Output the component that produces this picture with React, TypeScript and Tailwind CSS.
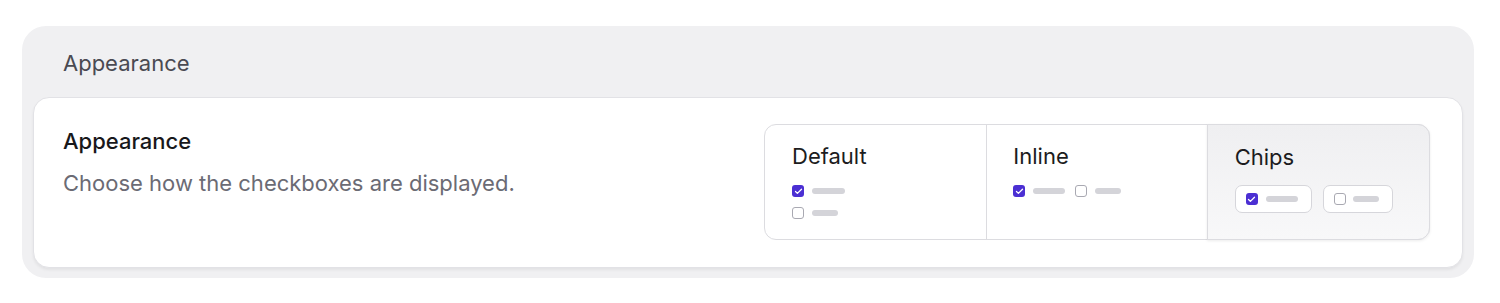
import { Check } from 'lucide-react'

const Box = ({ checked }: { checked?: boolean }) =>
  checked ? (
    <span className="flex h-[12px] w-[12px] items-center justify-center rounded-[3px] bg-[#4b2fd3]">
      <Check className="h-[9px] w-[9px] text-white" strokeWidth={3.5} />
    </span>
  ) : (
    <span className="h-[12px] w-[12px] rounded-[3px] border border-[#a9a9b2] bg-white" />
  )

const Bar = ({ w }: { w: string }) => <span className={`h-[6px] rounded-full bg-[#d4d4d9] ${w}`} />

export default function App() {
  return (
    <div className="min-h-screen bg-white pl-[22px] pr-[26px] pt-[26px] font-['Inter',sans-serif]">
      <div className="rounded-[24px] bg-[#f0f0f2] px-[11px] pb-[10px]">
        <div className="flex h-[71px] items-center px-[30px] pt-[4px] text-[22px] text-[#4a4a52]">Appearance</div>
        <div className="flex items-start justify-between rounded-[16px] border border-[#e2e2e6] bg-white pl-[29px] pr-[32px] pt-[26px] pb-[27px] shadow-[0_2px_3px_rgba(0,0,0,0.06)]">
          <div className="pt-[3px] leading-[28px]">
            <div className="text-[22px] font-medium text-[#18181b]">Appearance</div>
            <div className="mt-[14px] text-[22px] text-[#6b6b74]">Choose how the checkboxes are displayed.</div>
          </div>
          <div className="flex h-[116px] w-[666px] rounded-[12px] border border-[#dcdce0] bg-white">
            <div className="flex-1 px-[27px] pt-[17px]">
              <div className="text-[22px] leading-[28px] text-[#1c1c20]">Default</div>
              <div className="mt-[15px] flex items-center gap-[8px]">
                <Box checked />
                <Bar w="w-[33px]" />
              </div>
              <div className="mt-[10px] flex items-center gap-[8px]">
                <Box />
                <Bar w="w-[26px]" />
              </div>
            </div>
            <div className="flex-1 border-l border-[#dcdce0] px-[26px] pt-[17px]">
              <div className="text-[22px] leading-[28px] text-[#1c1c20]">Inline</div>
              <div className="mt-[15px] flex items-center">
                <Box checked />
                <span className="ml-[8px] flex">
                  <Bar w="w-[32px]" />
                </span>
                <span className="ml-[10px] flex">
                  <Box />
                </span>
                <span className="ml-[8px] flex">
                  <Bar w="w-[26px]" />
                </span>
              </div>
            </div>
            <div className="-my-px -mr-px flex-1 rounded-r-[12px] border border-[#dcdce0] bg-gradient-to-b from-[#efeff1] to-[#f8f8f9] px-[27px] pt-[18px] shadow-[0_1px_3px_rgba(0,0,0,0.08)]">
              <div className="text-[22px] leading-[28px] text-[#1c1c20]">Chips</div>
              <div className="mt-[14px] flex gap-[11px]">
                <div className="flex h-[28px] w-[77px] items-center gap-[8px] rounded-[7px] border border-[#d6d6db] bg-white pl-[10px]">
                  <Box checked />
                  <Bar w="w-[32px]" />
                </div>
                <div className="flex h-[28px] w-[70px] items-center gap-[7px] rounded-[7px] border border-[#d6d6db] bg-white pl-[10px]">
                  <Box />
                  <Bar w="w-[26px]" />
                </div>
              </div>
            </div>
          </div>
        </div>
      </div>
    </div>
  )
}
